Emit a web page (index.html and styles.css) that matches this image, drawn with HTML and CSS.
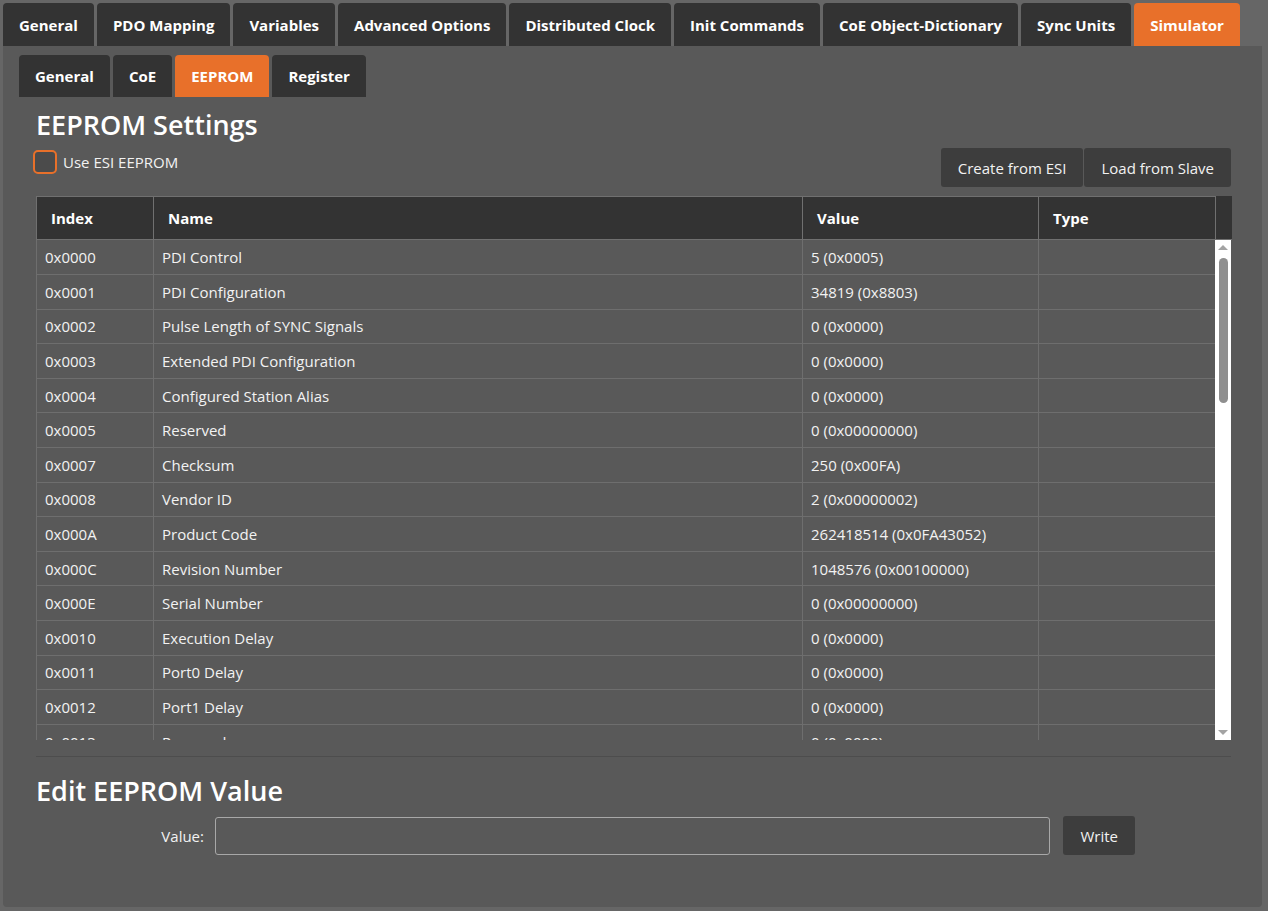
FILE: index.html
```html
<!DOCTYPE html>
<html lang="en">
<head>
  <meta charset="UTF-8" />
  <title>Simulator - EEPROM</title>
  <link rel="stylesheet" href="styles.css">
</head>
<body>
  <div class="tabs">
    <div class="tab">General</div>
    <div class="tab">PDO Mapping</div>
    <div class="tab">Variables</div>
    <div class="tab">Advanced Options</div>
    <div class="tab">Distributed Clock</div>
    <div class="tab">Init Commands</div>
    <div class="tab">CoE Object-Dictionary</div>
    <div class="tab">Sync Units</div>
    <div class="tab active">Simulator</div>
  </div>

  <div class="panel">
    <div class="subtabs">
      <div class="subtab">General</div>
      <div class="subtab">CoE</div>
      <div class="subtab active">EEPROM</div>
      <div class="subtab">Register</div>
    </div>

    <div class="content">
      <h2>EEPROM Settings</h2>

      <div class="toolbar">
        <label class="check">
          <span class="box"></span>
          Use ESI EEPROM
        </label>
        <div class="btn-group">
          <button class="btn">Create from ESI</button>
          <button class="btn">Load from Slave</button>
        </div>
      </div>

      <div class="grid">
        <table class="grid-head">
          <colgroup>
            <col class="c-index"><col class="c-name"><col class="c-value"><col class="c-type"><col class="c-bar">
          </colgroup>
          <tr>
            <th>Index</th>
            <th>Name</th>
            <th>Value</th>
            <th>Type</th>
            <th class="filler"></th>
          </tr>
        </table>
        <div class="grid-body">
          <div class="rows">
            <table id="eepromTable">
              <colgroup>
                <col class="c-index"><col class="c-name"><col class="c-value"><col class="c-type">
              </colgroup>
              <tbody></tbody>
            </table>
          </div>
          <div class="scrollbar">
            <span class="arrow up"></span>
            <span class="thumb"></span>
            <span class="arrow down"></span>
          </div>
        </div>
      </div>

      <div class="divider"></div>

      <h2>Edit EEPROM Value</h2>
      <div class="edit-row">
        <label for="value">Value:</label>
        <input type="text" id="value" />
        <button class="btn write-btn">Write</button>
      </div>
    </div>
  </div>

  <script>
  // EEPROM words read from the slave
  const eeprom = [
    ["0x0000", "PDI Control", "5 (0x0005)"],
    ["0x0001", "PDI Configuration", "34819 (0x8803)"],
    ["0x0002", "Pulse Length of SYNC Signals", "0 (0x0000)"],
    ["0x0003", "Extended PDI Configuration", "0 (0x0000)"],
    ["0x0004", "Configured Station Alias", "0 (0x0000)"],
    ["0x0005", "Reserved", "0 (0x00000000)"],
    ["0x0007", "Checksum", "250 (0x00FA)"],
    ["0x0008", "Vendor ID", "2 (0x00000002)"],
    ["0x000A", "Product Code", "262418514 (0x0FA43052)"],
    ["0x000C", "Revision Number", "1048576 (0x00100000)"],
    ["0x000E", "Serial Number", "0 (0x00000000)"],
    ["0x0010", "Execution Delay", "0 (0x0000)"],
    ["0x0011", "Port0 Delay", "0 (0x0000)"],
    ["0x0012", "Port1 Delay", "0 (0x0000)"],
    ["0x0013", "Reserved", "0 (0x0000)"]
  ];

  const tbody = document.querySelector("#eepromTable tbody");
  eeprom.forEach(row => {
    const tr = document.createElement("tr");
    row.concat([""]).forEach(text => {
      const td = document.createElement("td");
      td.textContent = text;
      tr.appendChild(td);
    });
    tbody.appendChild(tr);
  });
  </script>
</body>
</html>
```

FILE: styles.css
```css
* {
  box-sizing: border-box;
}

body {
  margin: 0;
  padding: 3px 6px 4px 3px;
  background: #666;
  color: #f2f2f2;
  font-family: "Open Sans", "Noto Sans", sans-serif;
  font-size: 15px;
}

.tabs {
  display: flex;
  gap: 3px;
}

.tab {
  height: 43px;
  line-height: 44px;
  padding: 0 16px;
  background: #333;
  color: #fff;
  font-weight: bold;
  border-radius: 4px 4px 0 0;
}

.tab.active,
.subtab.active {
  background: #e8702a;
}

.panel {
  height: 861px;
  background: #595959;
  padding: 9px 16px 0;
  border-radius: 0 0 4px 4px;
}

.subtabs {
  display: flex;
  gap: 3px;
}

.subtab {
  height: 42px;
  line-height: 42px;
  padding: 0 16px;
  background: #333;
  color: #fff;
  font-weight: bold;
  border-radius: 4px 4px 0 0;
}

.content {
  padding: 0 15px 0 17px;
}

h2 {
  margin: 12px 0 0;
  font-size: 27px;
  line-height: 32px;
  font-weight: 600;
  color: #fff;
}

.toolbar {
  display: flex;
  justify-content: space-between;
  align-items: flex-start;
  margin-top: 7px;
}

.check {
  display: flex;
  align-items: center;
  gap: 6px;
  margin-top: 2px;
  margin-left: -3px;
}

.box {
  width: 24px;
  height: 24px;
  border: 2px solid #e8702a;
  border-radius: 5px;
  background: #4b4b4b;
}

.btn-group {
  display: flex;
  gap: 1px;
}

.btn {
  height: 39px;
  padding: 0 17px;
  background: #3d3d3d;
  color: #f2f2f2;
  border: none;
  border-radius: 3px;
  font-family: inherit;
  font-size: 15px;
}

.grid {
  margin-top: 9px;
}

table {
  width: 100%;
  border-collapse: collapse;
  table-layout: fixed;
}

.c-index { width: 117px; }
.c-name { width: 649px; }
.c-value { width: 236px; }
.c-type { width: 177px; }
.c-bar { width: 16px; }

.grid-head th {
  height: 43px;
  padding: 0 14px;
  background: #333;
  color: #fff;
  text-align: left;
  font-weight: bold;
  border: 1px solid #707070;
}

.grid-head th.filler {
  border-left: none;
  border-right: none;
  border-top-color: #333;
}

.grid-body {
  display: flex;
  height: 500px;
}

.rows {
  flex: 1;
  overflow: hidden;
}

.rows td {
  height: 34.6px;
  padding: 0 8px;
  border: 1px solid #6e6e6e;
  border-top: none;
  white-space: nowrap;
  overflow: hidden;
}

.rows tr td:last-child {
  border-right: none;
}

.scrollbar {
  width: 16px;
  background: #fff;
  display: flex;
  flex-direction: column;
  align-items: center;
}

.arrow {
  width: 0;
  height: 0;
  border-left: 5px solid transparent;
  border-right: 5px solid transparent;
}

.arrow.up {
  margin-top: 5px;
  border-bottom: 5px solid #a3a3a3;
}

.arrow.down {
  margin-top: auto;
  margin-bottom: 5px;
  border-top: 5px solid #a3a3a3;
}

.thumb {
  width: 9px;
  height: 145px;
  margin-top: 8px;
  background: #8f8f8f;
  border-radius: 5px;
}

.divider {
  margin-top: 16px;
  border-top: 1px solid #4d4d4d;
}

.divider + h2 {
  margin-top: 18px;
}

.edit-row {
  display: flex;
  align-items: center;
  gap: 11px;
  margin-top: 9px;
  padding-right: 96px;
}

.edit-row label {
  width: 168px;
  text-align: right;
}

.edit-row input {
  flex: 1;
  height: 38px;
  background: #595959;
  border: 1px solid #a8a8a8;
  border-radius: 3px;
  color: #fff;
  font-family: inherit;
  font-size: 15px;
}

.write-btn {
  margin-left: 2px;
}
```
